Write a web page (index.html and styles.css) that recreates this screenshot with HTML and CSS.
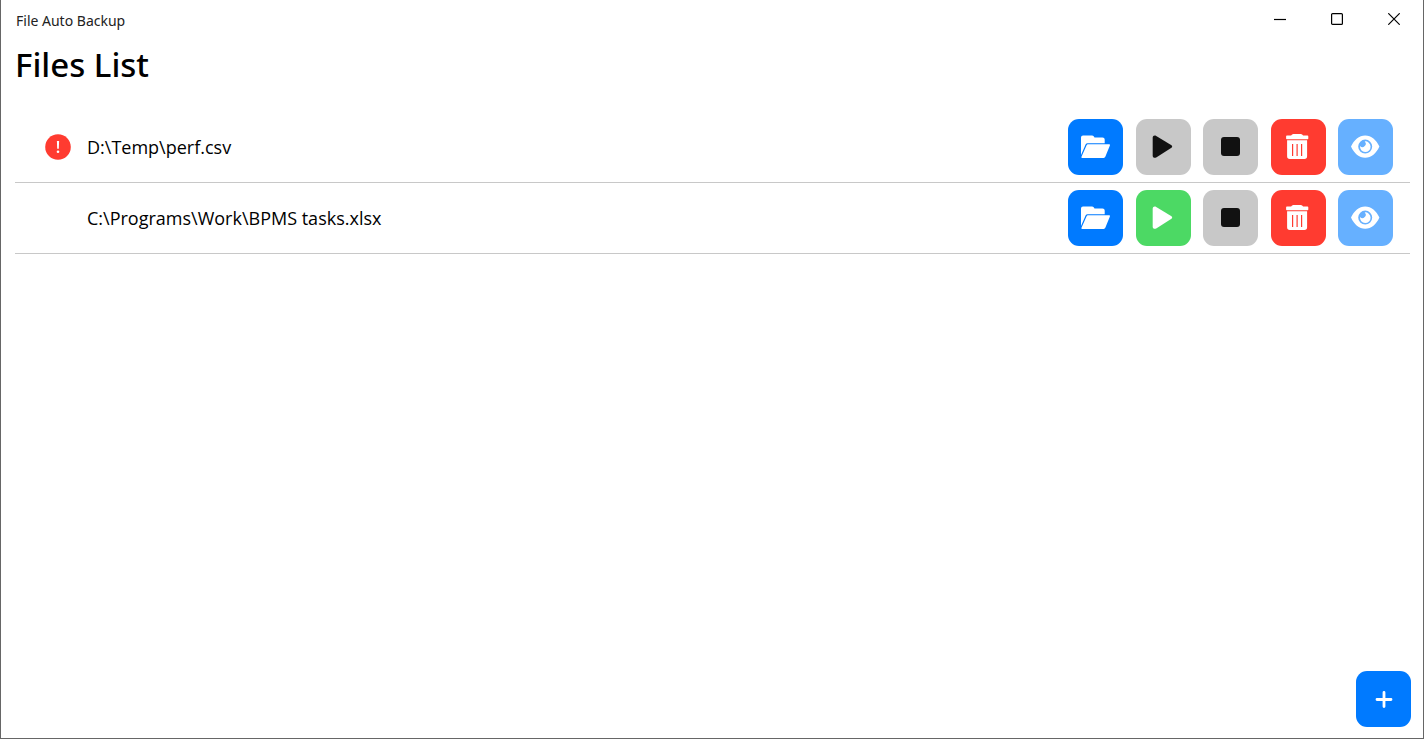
FILE: index.html
```html
<!DOCTYPE html>
<html lang="en">
<head>
  <meta charset="UTF-8" />
  <meta name="viewport" content="width=device-width, initial-scale=1.0" />
  <title>File Auto Backup</title>
  <link rel="stylesheet" href="styles.css">
</head>
<body>
  <!-- shared icons -->
  <svg class="sprite" aria-hidden="true">
    <symbol id="folder" viewBox="0 0 32 32">
      <path d="M1 24V6.5Q1 4.5 3 4.5H12Q13.1 4.5 13.7 5.3L14.5 6.4H22.5Q24.7 6.4 24.7 8.6V12.2H7.5Q6.3 12.2 5.7 13.3Z" />
      <path d="M7.9 13.3H29.1Q30.4 13.3 29.9 14.5L25.3 25.8Q24.9 26.9 23.7 26.9H2.3Q1 26.9 1.5 25.7L6.6 14.2Q7 13.3 7.9 13.3Z" />
    </symbol>
    <symbol id="play" viewBox="0 0 32 32">
      <path d="M5.7 6.7C5.7 4.8 7.5 4 9.2 5L24.1 13.9Q26.3 15.4 24.1 17L9.2 26.4C7.5 27.4 5.7 26.6 5.7 24.7Z" />
    </symbol>
    <symbol id="stop" viewBox="0 0 32 32">
      <rect x="6" y="6" width="19" height="19" rx="3" />
    </symbol>
    <symbol id="trash" viewBox="0 0 32 32">
      <path d="M4.9 4.6H9.1Q9.9 3 11.3 3H18.9Q20.3 3 21.1 4.6H25.5Q26.3 4.6 26.3 5.4V7.4Q26.3 8.2 25.5 8.2H4.9Q4.1 8.2 4.1 7.4V5.4Q4.1 4.6 4.9 4.6Z" />
      <path fill-rule="evenodd" d="M5.1 9.3H25.1V25.3Q25.1 28 22.4 28H7.8Q5.1 28 5.1 25.3ZM10 13V25H11.2V13ZM14.5 13V25H15.7V13ZM19 13V25H20.2V13Z" />
    </symbol>
    <symbol id="eye" viewBox="0 0 32 32">
      <path fill-rule="evenodd" d="M1 15.6C4 8.8 9.1 4.4 15.2 4.4S26.4 8.8 29.4 15.6C26.4 22.4 21.3 26.8 15.2 26.8S4 22.4 1 15.6ZM15.2 8.6A7 7 0 1 0 15.2 22.6A7 7 0 1 0 15.2 8.6Z" />
      <path d="M14.7 10.4A5.3 5.3 0 1 1 10 15.1A3 3 0 1 0 14.7 10.4Z" />
    </symbol>
    <symbol id="plus" viewBox="0 0 32 32">
      <path d="M16 9.4V23.6M9 16.5H23" fill="none" stroke="currentColor" stroke-width="2.8" stroke-linecap="round" />
    </symbol>
  </svg>

  <div class="window">
    <header class="titlebar">
      <span class="app-name">File Auto Backup</span>
      <div class="window-controls">
        <button aria-label="Minimize"><svg viewBox="0 0 12 12"><path d="M0 6.5H12" /></svg></button>
        <button aria-label="Maximize"><svg viewBox="0 0 12 12"><rect x="0.6" y="0.6" width="10.8" height="10.8" rx="1" /></svg></button>
        <button aria-label="Close"><svg viewBox="0 0 12 12"><path d="M0.3 0.3L11.7 11.7M11.7 0.3L0.3 11.7" /></svg></button>
      </div>
    </header>

    <main>
      <h1>Files List</h1>
      <ul class="files">
        <li class="file">
          <span class="status">
            <svg viewBox="0 0 26 26" role="img" aria-label="Error">
              <circle cx="13" cy="13" r="12.8" fill="#ff3b30" />
              <path d="M11.9 7H14.1L13.8 14.8H12.2Z" fill="#fff" />
              <circle cx="13" cy="17.8" r="1.3" fill="#fff" />
            </svg>
          </span>
          <span class="path">D:\Temp\perf.csv</span>
          <div class="actions">
            <button class="btn blue" aria-label="Open folder"><svg><use href="#folder" /></svg></button>
            <button class="btn gray" aria-label="Start" disabled><svg><use href="#play" /></svg></button>
            <button class="btn gray" aria-label="Stop" disabled><svg><use href="#stop" /></svg></button>
            <button class="btn red" aria-label="Delete"><svg><use href="#trash" /></svg></button>
            <button class="btn light" aria-label="View"><svg><use href="#eye" /></svg></button>
          </div>
        </li>
        <li class="file">
          <span class="status"></span>
          <span class="path">C:\Programs\Work\BPMS tasks.xlsx</span>
          <div class="actions">
            <button class="btn blue" aria-label="Open folder"><svg><use href="#folder" /></svg></button>
            <button class="btn green" aria-label="Start"><svg><use href="#play" /></svg></button>
            <button class="btn gray" aria-label="Stop" disabled><svg><use href="#stop" /></svg></button>
            <button class="btn red" aria-label="Delete"><svg><use href="#trash" /></svg></button>
            <button class="btn light" aria-label="View"><svg><use href="#eye" /></svg></button>
          </div>
        </li>
      </ul>
    </main>

    <footer>
      <button class="btn blue" aria-label="Add file"><svg><use href="#plus" /></svg></button>
    </footer>
  </div>
</body>
</html>
```
FILE: styles.css
```css
* {
  box-sizing: border-box;
}
body {
  margin: 0;
  font-family: "Open Sans", sans-serif;
  color: #000;
  background: #fff;
}
button {
  padding: 0;
  border: none;
  background: none;
  color: inherit;
  cursor: pointer;
}
.sprite {
  display: none;
}
.window {
  display: flex;
  flex-direction: column;
  min-height: 100vh;
  border: 1px solid #666;
  border-top: none;
}
.titlebar {
  display: flex;
  justify-content: space-between;
  height: 40px;
  padding: 0 1px 0 15px;
}
.app-name {
  font-family: "Noto Sans", sans-serif;
  font-size: 14px;
  line-height: 42px;
  color: #222;
}
.window-controls {
  display: flex;
}
.window-controls button {
  display: flex;
  align-items: center;
  justify-content: center;
  width: 57px;
  height: 38px;
}
.window-controls svg {
  width: 12px;
  height: 12px;
  fill: none;
  stroke: #000;
  stroke-width: 1.2;
}
main {
  flex: 1;
  padding: 0 13px 0 14px;
}
h1 {
  margin: 0 0 22px;
  font-family: "Noto Sans", sans-serif;
  font-size: 33px;
  font-weight: 500;
  line-height: 50px;
}
.files {
  margin: 0;
  padding: 0;
  list-style: none;
}
.file {
  display: flex;
  align-items: center;
  padding: 7px 17px 7px 30px;
  border-bottom: 1px solid #c8c8c8;
}
.status {
  width: 26px;
  height: 26px;
  margin-right: 16px;
}
.status svg {
  display: block;
}
.path {
  flex: 1;
  font-size: 18px;
  line-height: 26px;
}
.actions {
  display: flex;
  justify-content: space-between;
  width: 325px;
}
.btn {
  display: flex;
  align-items: center;
  justify-content: center;
  width: 55px;
  height: 56px;
  border-radius: 11px;
  color: #fff;
}
.btn svg {
  width: 32px;
  height: 32px;
  fill: currentColor;
}
.blue {
  background: #007aff;
}
.gray {
  background: #c8c8c8;
  color: #111;
}
.green {
  background: #4cd964;
}
.red {
  background: #ff3b30;
}
.light {
  background: #66b0ff;
}
footer {
  display: flex;
  justify-content: flex-end;
  padding: 0 12px 11px;
}
```
